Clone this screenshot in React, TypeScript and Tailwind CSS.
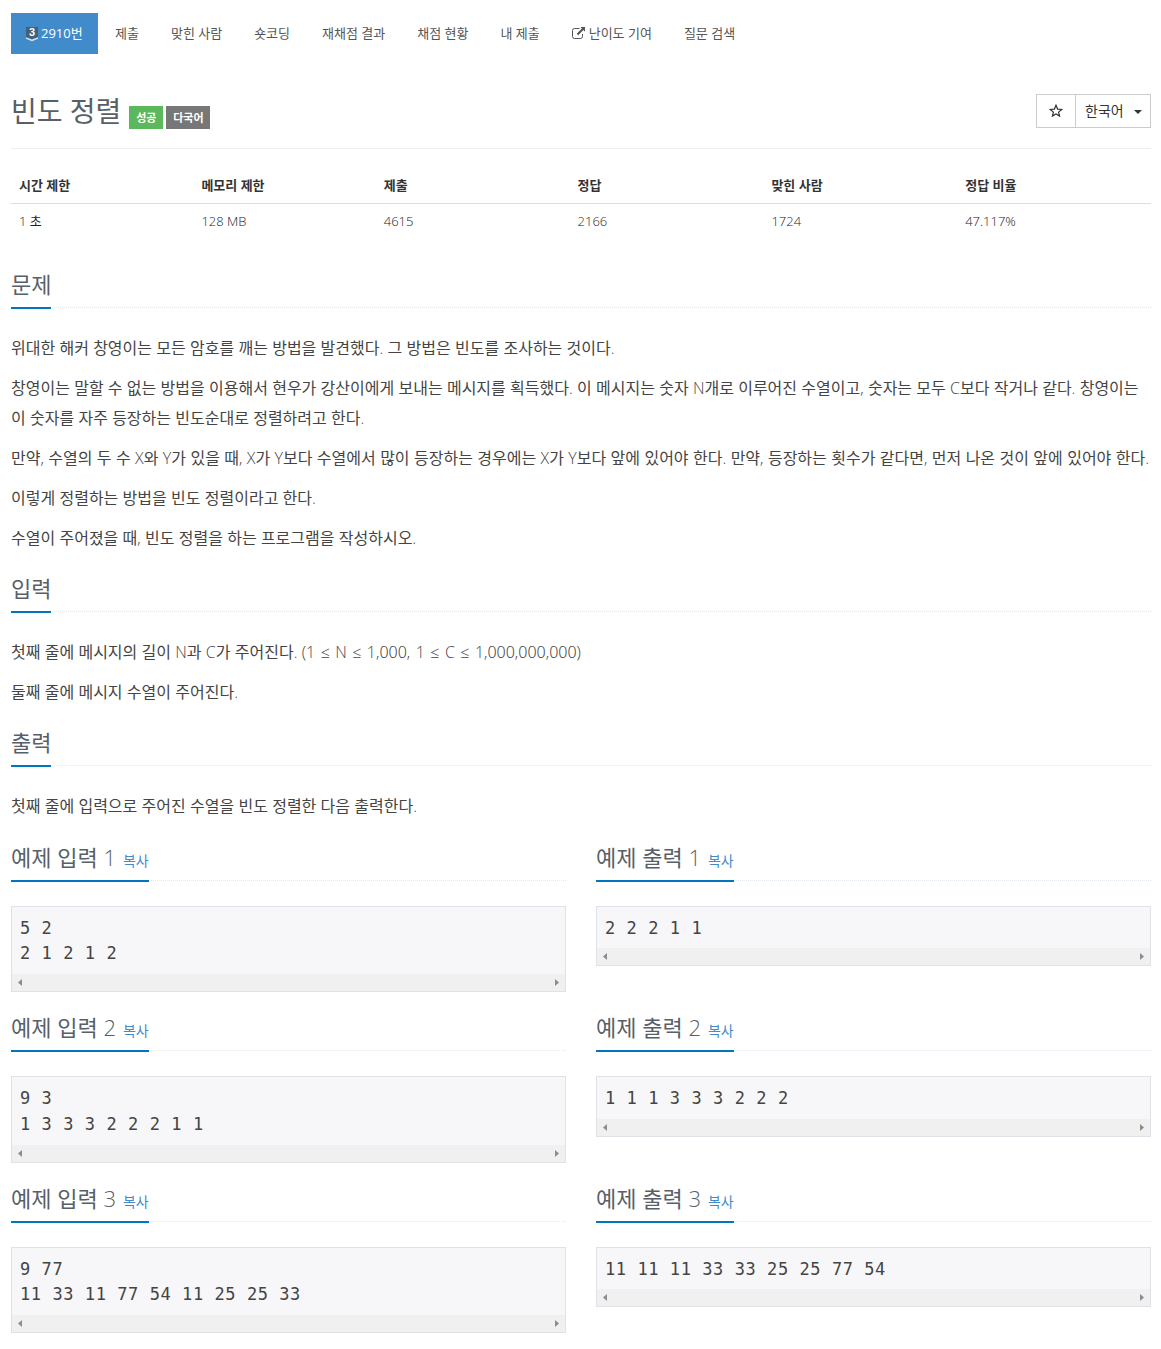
import React from "react";

const tabs = [
  "제출",
  "맞힌 사람",
  "숏코딩",
  "재채점 결과",
  "채점 현황",
  "내 제출",
  "난이도 기여",
  "질문 검색",
];

const limits = [
  { label: "시간 제한", value: "1 초", width: "w-[16%]" },
  { label: "메모리 제한", value: "128 MB", width: "w-[16%]" },
  { label: "제출", value: "4615", width: "w-[17%]" },
  { label: "정답", value: "2166", width: "w-[17%]" },
  { label: "맞힌 사람", value: "1724", width: "w-[17%]" },
  { label: "정답 비율", value: "47.117%", width: "w-[17%]" },
];

const samples = [
  { input: "5 2\n2 1 2 1 2", output: "2 2 2 1 1" },
  { input: "9 3\n1 3 3 3 2 2 2 1 1", output: "1 1 1 3 3 3 2 2 2" },
  {
    input: "9 77\n11 33 11 77 54 11 25 25 33",
    output: "11 11 11 33 33 25 25 77 54",
  },
];

function TierBadge() {
  return (
    <svg className="mt-px mr-[3px] h-[15px] w-3 shrink-0" viewBox="0 0 12 15">
      <path d="M0 0h12v10L6 12.5 0 10z" fill="#435f7a" />
      <path d="M0 10.2l6 2.4 6-2.4v1.5l-6 2.5-6-2.5z" fill="#d5e2ee" />
      <text
        x="6"
        y="9.4"
        fill="#fff"
        fontFamily="Liberation Sans"
        fontSize="11"
        fontWeight="700"
        textAnchor="middle"
      >
        3
      </text>
    </svg>
  );
}

function ExternalLinkIcon() {
  return (
    <svg className="-mt-px mr-1 h-3 w-[13px] shrink-0" viewBox="0 0 13 12">
      <path
        d="M7.5 1.5h-5a2 2 0 0 0-2 2v6a2 2 0 0 0 2 2h6a2 2 0 0 0 2-2V7"
        fill="none"
        stroke="#555"
      />
      <path d="M8.3 0H13v4.7l-1.6-1.6-5.2 5.2-1.5-1.5 5.2-5.2z" fill="#555" />
    </svg>
  );
}

function Headline({ title, copy }: { title: string; copy?: boolean }) {
  return (
    <div className="mb-[25px] flex h-[49px] items-end border-b border-dotted border-[#e4e9f0]">
      <h2 className="-mb-0.5 border-b-2 border-[#0076c0] pb-1.5 text-[22px] leading-[33px] text-[#585f69]">
        {title}
        {copy && (
          <a href="#" className="ml-[7px] text-sm text-[#428bca]">
            복사
          </a>
        )}
      </h2>
    </div>
  );
}

function Paragraph({ children }: { children: React.ReactNode }) {
  return (
    <p className="mb-2.5 text-[16px] leading-[30px] [word-spacing:0.12px] whitespace-nowrap text-[#444]">
      {children}
    </p>
  );
}

function SampleData({ data }: { data: string }) {
  return (
    <div className="mb-2.5 border border-[#e0e2e8] bg-[#f7f7f9]">
      <pre className="px-2 pt-[9px] pb-[7px] font-['DejaVu_Sans_Mono',monospace] text-[17px] leading-[25.71px] tracking-[0.57px] text-[#444]">
        {data}
      </pre>
      <div className="flex h-[17px] items-center justify-between bg-[#f0f0f0] px-1.5">
        <svg className="h-[7px] w-1" viewBox="0 0 4 7">
          <path d="M4 0v7L0 3.5z" fill="#8c8c8c" />
        </svg>
        <svg className="h-[7px] w-1" viewBox="0 0 4 7">
          <path d="M0 0v7l4-3.5z" fill="#8c8c8c" />
        </svg>
      </div>
    </div>
  );
}

function App() {
  return (
    <div className="h-[1349px] overflow-hidden bg-white pt-[13px] pr-2.5 pl-[11px] font-['Open_Sans_Light','Open_Sans','Noto_Sans_CJK_KR',sans-serif] text-[13px] text-[#333]">
      <nav className="flex h-[41px] gap-0.5 text-[#555]">
        <a
          href="#"
          className="flex w-[87px] items-center bg-[#428bca] pl-[15px] font-['Open_Sans','Noto_Sans_CJK_KR',sans-serif] whitespace-nowrap text-white"
        >
          <TierBadge />
          2910번
        </a>
        {tabs.map((tab) => (
          <a
            key={tab}
            href="#"
            className="flex items-center px-[15px] whitespace-nowrap"
          >
            {tab === "난이도 기여" && <ExternalLinkIcon />}
            {tab}
          </a>
        ))}
      </nav>

      <header className="mt-[30px] flex h-[65px] justify-between border-b border-[#eee]">
        <div className="flex">
          <h1 className="mt-[7px] text-[28px] leading-[40px] text-[#585f69]">
            빈도 정렬
          </h1>
          <div className="mt-[22px] ml-2 flex gap-[3px] text-[11px] leading-[23px] font-bold text-white">
            <span className="h-[23px] w-[34px] bg-[#5cb85c] text-center">
              성공
            </span>
            <span className="h-[23px] w-[44px] bg-[#777] text-center">
              다국어
            </span>
          </div>
        </div>
        <div className="mt-2.5 flex h-[34px] border border-[#ccc] text-sm">
          <button className="flex w-[39px] items-center justify-center border-r border-[#ccc]">
            <svg className="-mt-px h-[13px] w-[14px]" viewBox="0 0 14 13">
              <path
                d="M7 1.2l1.6 3.9 4.2.3-3.2 2.7 1 4L7 9.9l-3.6 2.2 1-4L1.2 5.4l4.2-.3z"
                fill="none"
                stroke="#333"
                strokeWidth="1.2"
              />
            </svg>
          </button>
          <button className="flex w-[74px] items-center pl-[9px]">
            <span className="-mt-px">한국어</span>
            <span className="mt-0.5 ml-2.5 border-x-4 border-t-4 border-x-transparent border-t-[#333]" />
          </button>
        </div>
      </header>

      <table className="mt-[19px] mb-5 w-full table-fixed text-left">
        <thead>
          <tr className="h-[35px] border-b border-[#ddd]">
            {limits.map((item) => (
              <th
                key={item.label}
                className={`${item.width} px-2 pt-px font-bold`}
              >
                {item.label}
              </th>
            ))}
          </tr>
        </thead>
        <tbody>
          <tr className="h-[36px] text-[#222]">
            {limits.map((item) => (
              <td key={item.label} className="px-2">
                {item.value}
              </td>
            ))}
          </tr>
        </tbody>
      </table>

      <section>
        <Headline title="문제" />
        <Paragraph>
          위대한 해커 창영이는 모든 암호를 깨는 방법을 발견했다. 그 방법은 빈도를
          조사하는 것이다.
        </Paragraph>
        <Paragraph>
          창영이는 말할 수 없는 방법을 이용해서 현우가 강산이에게 보내는 메시지를
          획득했다. 이 메시지는 숫자 N개로 이루어진 수열이고, 숫자는 모두 C보다
          작거나 같다. 창영이는
          <br />이 숫자를 자주 등장하는 빈도순대로 정렬하려고 한다.
        </Paragraph>
        <Paragraph>
          <span className="[word-spacing:0.25px]">
            만약, 수열의 두 수 X와 Y가 있을 때, X가 Y보다 수열에서 많이 등장하는
            경우에는 X가 Y보다 앞에 있어야 한다. 만약, 등장하는 횟수가 같다면,
            먼저 나온 것이 앞에 있어야 한다.
          </span>
        </Paragraph>
        <Paragraph>이렇게 정렬하는 방법을 빈도 정렬이라고 한다.</Paragraph>
        <Paragraph>
          수열이 주어졌을 때, 빈도 정렬을 하는 프로그램을 작성하시오.
        </Paragraph>
      </section>

      <section>
        <Headline title="입력" />
        <Paragraph>
          첫째 줄에 메시지의 길이 N과 C가 주어진다.{" "}
          <span className="[word-spacing:1.3px]">
            (1 ≤ N ≤ 1,000, 1 ≤ C ≤ 1,000,000,000)
          </span>
        </Paragraph>
        <Paragraph>둘째 줄에 메시지 수열이 주어진다.</Paragraph>
      </section>

      <section className="mb-[10.7px]">
        <Headline title="출력" />
        <Paragraph>
          첫째 줄에 입력으로 주어진 수열을 빈도 정렬한 다음 출력한다.
        </Paragraph>
      </section>

      {samples.map((sample, i) => (
        <div key={i} className="grid grid-cols-2 gap-[30px]">
          <section>
            <Headline title={`예제 입력 ${i + 1}`} copy />
            <SampleData data={sample.input} />
          </section>
          <section>
            <Headline title={`예제 출력 ${i + 1}`} copy />
            <SampleData data={sample.output} />
          </section>
        </div>
      ))}
    </div>
  );
}

export default App;
